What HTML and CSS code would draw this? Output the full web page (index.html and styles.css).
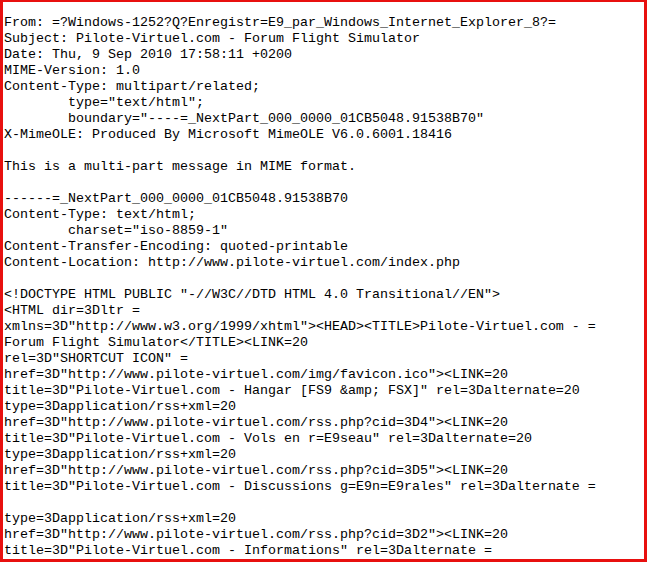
FILE: index.html
```html
<!DOCTYPE html>
<html>
<head>
<meta charset="utf-8">
<link rel="stylesheet" href="styles.css">
</head>
<body>
<div class="frame">
<pre class="source">From: =?Windows-1252?Q?Enregistr=E9_par_Windows_Internet_Explorer_8?=
Subject: Pilote-Virtuel.com - Forum Flight Simulator
Date: Thu, 9 Sep 2010 17:58:11 +0200
MIME-Version: 1.0
Content-Type: multipart/related;
        type="text/html";
        boundary="----=_NextPart_000_0000_01CB5048.91538B70"
X-MimeOLE: Produced By Microsoft MimeOLE V6.0.6001.18416

This is a multi-part message in MIME format.

------=_NextPart_000_0000_01CB5048.91538B70
Content-Type: text/html;
        charset="iso-8859-1"
Content-Transfer-Encoding: quoted-printable
Content-Location: http://www.pilote-virtuel.com/index.php

&lt;!DOCTYPE HTML PUBLIC "-//W3C//DTD HTML 4.0 Transitional//EN"&gt;
&lt;HTML dir=3Dltr =
xmlns=3D"http://www.w3.org/1999/xhtml"&gt;&lt;HEAD&gt;&lt;TITLE&gt;Pilote-Virtuel.com - =
Forum Flight Simulator&lt;/TITLE&gt;&lt;LINK=20
rel=3D"SHORTCUT ICON" =
href=3D"http://www.pilote-virtuel.com/img/favicon.ico"&gt;&lt;LINK=20
title=3D"Pilote-Virtuel.com - Hangar [FS9 &amp;amp; FSX]" rel=3Dalternate=20
type=3Dapplication/rss+xml=20
href=3D"http://www.pilote-virtuel.com/rss.php?cid=3D4"&gt;&lt;LINK=20
title=3D"Pilote-Virtuel.com - Vols en r=E9seau" rel=3Dalternate=20
type=3Dapplication/rss+xml=20
href=3D"http://www.pilote-virtuel.com/rss.php?cid=3D5"&gt;&lt;LINK=20
title=3D"Pilote-Virtuel.com - Discussions g=E9n=E9rales" rel=3Dalternate =

type=3Dapplication/rss+xml=20
href=3D"http://www.pilote-virtuel.com/rss.php?cid=3D2"&gt;&lt;LINK=20
title=3D"Pilote-Virtuel.com - Informations" rel=3Dalternate =
</pre>
</div>
</body>
</html>
```
FILE: styles.css
```css
html, body {
  margin: 0;
  padding: 0;
  background: #ffffff;
}

.frame {
  box-sizing: border-box;
  width: 647px;
  height: 562px;
  border-style: solid;
  border-color: #e8100f;
  border-width: 2px 3px 3px 3px;
  background: #ffffff;
  overflow: hidden;
}

.source {
  margin: 0;
  padding: 13px 0 0 1px;
  font-family: "Liberation Mono", "Courier New", monospace;
  font-size: 13.333px;
  line-height: 16px;
  color: #000000;
  white-space: pre;
}
```
